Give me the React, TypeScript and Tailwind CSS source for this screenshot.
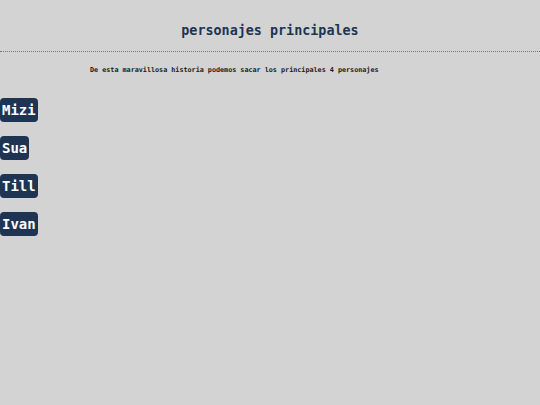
import React from 'react';

const personajes = ['Mizi', 'Sua', 'Till', 'Ivan'];

export default function App() {
  return (
    <div className="min-h-[405px] w-full bg-[#d3d3d3] font-['DejaVu_Sans_Mono',monospace]">
      <header className="pt-[22px] pb-[11px] border-b border-dotted border-[#777]">
        <h1 className="text-center text-[13.4px] font-bold leading-[18px] text-[#1f3352]">
          personajes principales
        </h1>
      </header>

      <p className="mt-[13px] ml-[90px] text-[6.75px] font-bold leading-[10px] text-[#1a1a1a]">
        De esta maravillosa historia podemos sacar los principales 4 personajes
      </p>

      <div className="mt-[23px] flex flex-col items-start gap-[14px]">
        {personajes.map(p => (
          <button
            key={p}
            className="h-[24px] rounded-[4px] bg-[#1f3352] px-[2px] text-[14px] font-bold leading-[24px] text-white"
          >
            {p}
          </button>
        ))}
      </div>
    </div>
  );
}
